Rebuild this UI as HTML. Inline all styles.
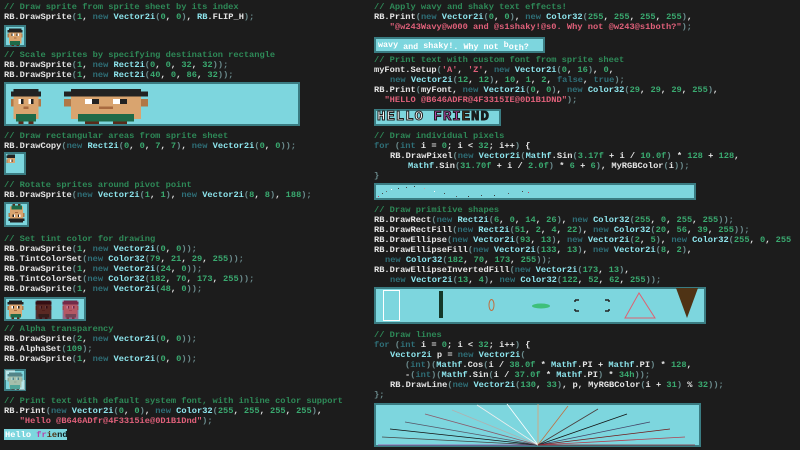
<!DOCTYPE html>
<html><head><meta charset="utf-8"><style>
html,body{margin:0;padding:0;background:#1c1c1c;width:800px;height:450px;overflow:hidden;position:relative}
.l{position:absolute;white-space:pre;font-family:"Liberation Mono",monospace;font-size:8.7px;line-height:10px;color:#e6e6e6;font-weight:bold}
.c{color:#2e8a58}.k{color:#2f6f78}.t{color:#8ee6ee}.n{color:#3aaa70}.s{color:#e0607a}.p{color:#6a8a8c}
.box{position:absolute;background:#7dd6de;border:2px solid #3a7c82;box-sizing:border-box}
svg{position:absolute}
</style></head><body>
<svg width="0" height="0" style="position:absolute">
<defs>
<g id="spr" shape-rendering="crispEdges">
<rect x="3" y="2" width="10" height="3" fill="#222"/>
<rect x="2" y="3" width="12" height="2" fill="#222"/>
<rect x="3" y="5" width="10" height="7" fill="#d9a46f"/>
<rect x="2" y="6" width="1" height="3" fill="#b07848"/>
<rect x="13" y="6" width="1" height="3" fill="#b07848"/>
<rect x="5" y="6" width="1" height="2" fill="#fff"/><rect x="6" y="6" width="1" height="2" fill="#222"/>
<rect x="9" y="6" width="1" height="2" fill="#fff"/><rect x="10" y="6" width="1" height="2" fill="#222"/>
<rect x="7" y="9" width="2" height="1" fill="#a86a40"/>
<rect x="4" y="12" width="8" height="3" fill="#1e6a48"/>
<rect x="3" y="12" width="1" height="2" fill="#d9a46f"/><rect x="12" y="12" width="1" height="2" fill="#d9a46f"/>
<rect x="5" y="15" width="2" height="1" fill="#5a2a1a"/><rect x="9" y="15" width="2" height="1" fill="#5a2a1a"/>
</g>
</defs></svg>

<!-- LEFT -->
<div class="l c" style="left:4px;top:2px">// Draw sprite from sprite sheet by its index</div>
<div class="l" style="left:4px;top:12px">RB.DrawSprite<span class="p">(</span><span class="n">1</span>, <span class="k">new</span> <span class="t">Vector2i</span><span class="p">(</span><span class="n">0</span>, <span class="n">0</span><span class="p">)</span>, <span class="t">RB</span>.FLIP_H<span class="p">);</span></div>
<div class="box" style="left:4px;top:25px;width:22px;height:22px"></div>
<svg style="left:5px;top:26px" width="20" height="20" viewBox="0 0 16 16"><g transform="translate(16,0) scale(-1,1)"><use href="#spr"/></g></svg>

<div class="l c" style="left:4px;top:50px">// Scale sprites by specifying destination rectangle</div>
<div class="l" style="left:4px;top:60px">RB.DrawSprite<span class="p">(</span><span class="n">1</span>, <span class="k">new</span> <span class="t">Rect2i</span><span class="p">(</span><span class="n">0</span>, <span class="n">0</span>, <span class="n">32</span>, <span class="n">32</span><span class="p">));</span></div>
<div class="l" style="left:4px;top:70px">RB.DrawSprite<span class="p">(</span><span class="n">1</span>, <span class="k">new</span> <span class="t">Rect2i</span><span class="p">(</span><span class="n">40</span>, <span class="n">0</span>, <span class="n">86</span>, <span class="n">32</span><span class="p">));</span></div>
<div class="box" style="left:4px;top:82px;width:296px;height:44px"></div>
<svg style="left:6px;top:84px" width="40" height="40" viewBox="0 0 16 16" preserveAspectRatio="none"><use href="#spr"/></svg>
<svg style="left:50px;top:84px" width="112" height="40" viewBox="0 0 16 16" preserveAspectRatio="none"><use href="#spr"/></svg>

<div class="l c" style="left:4px;top:131px">// Draw rectangular areas from sprite sheet</div>
<div class="l" style="left:4px;top:141px">RB.DrawCopy<span class="p">(</span><span class="k">new</span> <span class="t">Rect2i</span><span class="p">(</span><span class="n">0</span>, <span class="n">0</span>, <span class="n">7</span>, <span class="n">7</span><span class="p">)</span>, <span class="k">new</span> <span class="t">Vector2i</span><span class="p">(</span><span class="n">0</span>, <span class="n">0</span><span class="p">));</span></div>
<div class="box" style="left:4px;top:152px;width:22px;height:23px"></div>
<svg style="left:5px;top:153px" width="10" height="10" viewBox="0 0 8 8"><use href="#spr" transform="translate(-1,-1)"/></svg>

<div class="l c" style="left:4px;top:180px">// Rotate sprites around pivot point</div>
<div class="l" style="left:4px;top:190px">RB.DrawSprite<span class="p">(</span><span class="k">new</span> <span class="t">Vector2i</span><span class="p">(</span><span class="n">1</span>, <span class="n">1</span><span class="p">)</span>, <span class="k">new</span> <span class="t">Vector2i</span><span class="p">(</span><span class="n">8</span>, <span class="n">8</span><span class="p">)</span>, <span class="n">188</span><span class="p">);</span></div>
<div class="box" style="left:4px;top:202px;width:25px;height:25px"></div>
<svg style="left:6px;top:204px" width="21" height="21" viewBox="0 0 16 16"><g transform="rotate(180 8 8)"><use href="#spr"/></g></svg>

<div class="l c" style="left:4px;top:234px">// Set tint color for drawing</div>
<div class="l" style="left:4px;top:244px">RB.DrawSprite<span class="p">(</span><span class="n">1</span>, <span class="k">new</span> <span class="t">Vector2i</span><span class="p">(</span><span class="n">0</span>, <span class="n">0</span><span class="p">));</span></div>
<div class="l" style="left:4px;top:254px">RB.TintColorSet<span class="p">(</span><span class="k">new</span> <span class="t">Color32</span><span class="p">(</span><span class="n">79</span>, <span class="n">21</span>, <span class="n">29</span>, <span class="n">255</span><span class="p">));</span></div>
<div class="l" style="left:4px;top:264px">RB.DrawSprite<span class="p">(</span><span class="n">1</span>, <span class="k">new</span> <span class="t">Vector2i</span><span class="p">(</span><span class="n">24</span>, <span class="n">0</span><span class="p">));</span></div>
<div class="l" style="left:4px;top:274px">RB.TintColorSet<span class="p">(</span><span class="k">new</span> <span class="t">Color32</span><span class="p">(</span><span class="n">182</span>, <span class="n">70</span>, <span class="n">173</span>, <span class="n">255</span><span class="p">));</span></div>
<div class="l" style="left:4px;top:284px">RB.DrawSprite<span class="p">(</span><span class="n">1</span>, <span class="k">new</span> <span class="t">Vector2i</span><span class="p">(</span><span class="n">48</span>, <span class="n">0</span><span class="p">));</span></div>
<div class="box" style="left:4px;top:297px;width:82px;height:24px"></div>
<svg style="left:5px;top:298px" width="21" height="21" viewBox="0 0 16 16"><use href="#spr"/></svg>
<svg style="left:33px;top:298px" width="21" height="21" viewBox="0 0 16 16"><use href="#spr"/><rect x="2" y="2" width="12" height="14" fill="#3a0a10" opacity=".8"/></svg>
<svg style="left:60px;top:298px" width="21" height="21" viewBox="0 0 16 16"><use href="#spr"/><rect x="2" y="2" width="12" height="14" fill="#a0305d" opacity=".65"/></svg>

<div class="l c" style="left:4px;top:324px">// Alpha transparency</div>
<div class="l" style="left:4px;top:334px">RB.DrawSprite<span class="p">(</span><span class="n">2</span>, <span class="k">new</span> <span class="t">Vector2i</span><span class="p">(</span><span class="n">0</span>, <span class="n">0</span><span class="p">));</span></div>
<div class="l" style="left:4px;top:344px">RB.AlphaSet<span class="p">(</span><span class="n">109</span><span class="p">);</span></div>
<div class="l" style="left:4px;top:354px">RB.DrawSprite<span class="p">(</span><span class="n">1</span>, <span class="k">new</span> <span class="t">Vector2i</span><span class="p">(</span><span class="n">0</span>, <span class="n">0</span><span class="p">));</span></div>
<div class="box" style="left:4px;top:369px;width:22px;height:22px"></div>
<svg style="left:5px;top:370px" width="20" height="20" viewBox="0 0 16 16" opacity=".45"><rect x="0" y="0" width="8" height="8" fill="#fff"/><rect x="8" y="8" width="8" height="8" fill="#fff"/><use href="#spr"/></svg>

<div class="l c" style="left:4px;top:396px">// Print text with default system font, with inline color support</div>
<div class="l" style="left:4px;top:406px">RB.Print<span class="p">(</span><span class="k">new</span> <span class="t">Vector2i</span><span class="p">(</span><span class="n">0</span>, <span class="n">0</span><span class="p">)</span>, <span class="k">new</span> <span class="t">Color32</span><span class="p">(</span><span class="n">255</span>, <span class="n">255</span>, <span class="n">255</span>, <span class="n">255</span><span class="p">)</span>,</div>
<div class="l" style="left:4px;top:416px">   <span class="s">"Hello @B646ADfr@4F3315ie@0D1B1Dnd"</span><span class="p">);</span></div>
<div style="position:absolute;left:4px;top:429px;width:63px;height:11px;background:#7dd6de"></div>
<div class="l" style="left:5px;top:430px;line-height:10px;color:#fff">Hello <span style="color:#b646ad">fr</span><span style="color:#4f3315">ie</span><span style="color:#0d1b1d">nd</span></div>

<!-- RIGHT -->
<div class="l c" style="left:374px;top:2px">// Apply wavy and shaky text effects!</div>
<div class="l" style="left:374px;top:12px">RB.Print<span class="p">(</span><span class="k">new</span> <span class="t">Vector2i</span><span class="p">(</span><span class="n">0</span>, <span class="n">0</span><span class="p">)</span>, <span class="k">new</span> <span class="t">Color32</span><span class="p">(</span><span class="n">255</span>, <span class="n">255</span>, <span class="n">255</span>, <span class="n">255</span><span class="p">)</span>,</div>
<div class="l" style="left:374px;top:22px">   <span class="s">"@w243Wavy@w000 and @s1shaky!@s0. Why not @w243@s1both?"</span><span class="p">);</span></div>
<div class="box" style="left:374px;top:37px;width:171px;height:16px"></div>
<div class="l" style="left:378px;top:42px;color:#fff;font-size:8.4px"><span style="position:relative;top:-2px">wavy</span> and <span style="position:relative;top:-1px">shaky!</span>. Why not <span style="position:relative;top:-2px">b</span>o<span style="position:relative;top:1px">th</span>?</div>

<div class="l c" style="left:374px;top:55px">// Print text with custom font from sprite sheet</div>
<div class="l" style="left:374px;top:65px">myFont.Setup<span class="p">(</span><span class="s">'A'</span>, <span class="s">'Z'</span>, <span class="k">new</span> <span class="t">Vector2i</span><span class="p">(</span><span class="n">0</span>, <span class="n">16</span><span class="p">)</span>, <span class="n">0</span>,</div>
<div class="l" style="left:390px;top:75px"><span class="k">new</span> <span class="t">Vector2i</span><span class="p">(</span><span class="n">12</span>, <span class="n">12</span><span class="p">)</span>, <span class="n">10</span>, <span class="n">1</span>, <span class="n">2</span>, <span class="k">false</span>, <span class="k">true</span><span class="p">);</span></div>
<div class="l" style="left:374px;top:85px">RB.Print<span class="p">(</span>myFont, <span class="k">new</span> <span class="t">Vector2i</span><span class="p">(</span><span class="n">0</span>, <span class="n">0</span><span class="p">)</span>, <span class="k">new</span> <span class="t">Color32</span><span class="p">(</span><span class="n">29</span>, <span class="n">29</span>, <span class="n">29</span>, <span class="n">255</span><span class="p">)</span>,</div>
<div class="l" style="left:374px;top:95px">  <span class="s">"HELLO @B646ADFR@4F3315IE@0D1B1DND"</span><span class="p">);</span></div>
<div class="box" style="left:374px;top:109px;width:127px;height:17px"></div>
<div class="l" style="left:377px;top:110px;font-size:14px;line-height:15px;font-weight:bold;letter-spacing:1px;color:#fff;-webkit-text-stroke:1px #1d1d1d">HELLO <span style="color:#b646ad">FRI</span><span style="color:#4f3315">E</span><span style="color:#0d1b1d">ND</span></div>

<div class="l c" style="left:374px;top:131px">// Draw individual pixels</div>
<div class="l" style="left:374px;top:141px"><span class="k">for</span> <span class="p">(</span><span class="k">int</span> i = <span class="n">0</span>; i &lt; <span class="n">32</span>; i++<span class="p">)</span> {</div>
<div class="l" style="left:390px;top:151px">RB.DrawPixel<span class="p">(</span><span class="k">new</span> <span class="t">Vector2i</span><span class="p">(</span><span class="t">Mathf</span>.Sin<span class="p">(</span><span class="n">3.17f</span> + i / <span class="n">10.0f</span><span class="p">)</span> * <span class="n">128</span> + <span class="n">128</span>,</div>
<div class="l" style="left:408px;top:161px"><span class="t">Mathf</span>.Sin<span class="p">(</span><span class="n">31.70f</span> + i / <span class="n">2.0f</span><span class="p">)</span> * <span class="n">6</span> + <span class="n">6</span><span class="p">)</span>, MyRGBColor<span class="p">(</span>i<span class="p">));</span></div>
<div class="l p" style="left:374px;top:171px">}</div>
<div class="box" style="left:374px;top:183px;width:322px;height:17px"></div>
<svg style="left:376px;top:185px" width="318" height="13" shape-rendering="crispEdges">
<rect x="2" y="11" width="1" height="1" fill="#c04060"/><rect x="6" y="8" width="1" height="1" fill="#444"/><rect x="10" y="6" width="1" height="1" fill="#666"/><rect x="15" y="4" width="1" height="1" fill="#fff"/><rect x="22" y="3" width="1" height="1" fill="#333"/><rect x="30" y="2" width="1" height="1" fill="#444"/><rect x="38" y="1" width="1" height="1" fill="#333"/><rect x="48" y="3" width="1" height="1" fill="#d0a0a0"/><rect x="58" y="6" width="1" height="1" fill="#fff"/><rect x="68" y="8" width="1" height="1" fill="#444"/><rect x="80" y="11" width="1" height="1" fill="#555"/><rect x="92" y="11" width="1" height="1" fill="#333"/><rect x="105" y="10" width="1" height="1" fill="#444"/><rect x="118" y="10" width="1" height="1" fill="#333"/><rect x="132" y="8" width="1" height="1" fill="#555"/><rect x="146" y="6" width="1" height="1" fill="#444"/><rect x="152" y="7" width="1" height="1" fill="#c04060"/></svg>

<div class="l c" style="left:374px;top:205px">// Draw primitive shapes</div>
<div class="l" style="left:374px;top:215px">RB.DrawRect<span class="p">(</span><span class="k">new</span> <span class="t">Rect2i</span><span class="p">(</span><span class="n">6</span>, <span class="n">0</span>, <span class="n">14</span>, <span class="n">26</span><span class="p">)</span>, <span class="k">new</span> <span class="t">Color32</span><span class="p">(</span><span class="n">255</span>, <span class="n">0</span>, <span class="n">255</span>, <span class="n">255</span><span class="p">));</span></div>
<div class="l" style="left:374px;top:225px">RB.DrawRectFill<span class="p">(</span><span class="k">new</span> <span class="t">Rect2i</span><span class="p">(</span><span class="n">51</span>, <span class="n">2</span>, <span class="n">4</span>, <span class="n">22</span><span class="p">)</span>, <span class="k">new</span> <span class="t">Color32</span><span class="p">(</span><span class="n">20</span>, <span class="n">56</span>, <span class="n">39</span>, <span class="n">255</span><span class="p">));</span></div>
<div class="l" style="left:374px;top:235px">RB.DrawEllipse<span class="p">(</span><span class="k">new</span> <span class="t">Vector2i</span><span class="p">(</span><span class="n">93</span>, <span class="n">13</span><span class="p">)</span>, <span class="k">new</span> <span class="t">Vector2i</span><span class="p">(</span><span class="n">2</span>, <span class="n">5</span><span class="p">)</span>, <span class="k">new</span> <span class="t">Color32</span><span class="p">(</span><span class="n">255</span>, <span class="n">0</span>, <span class="n">255</span></div>
<div class="l" style="left:374px;top:245px">RB.DrawEllipseFill<span class="p">(</span><span class="k">new</span> <span class="t">Vector2i</span><span class="p">(</span><span class="n">133</span>, <span class="n">13</span><span class="p">)</span>, <span class="k">new</span> <span class="t">Vector2i</span><span class="p">(</span><span class="n">8</span>, <span class="n">2</span><span class="p">)</span>,</div>
<div class="l" style="left:385px;top:255px"><span class="k">new</span> <span class="t">Color32</span><span class="p">(</span><span class="n">182</span>, <span class="n">70</span>, <span class="n">173</span>, <span class="n">255</span><span class="p">));</span></div>
<div class="l" style="left:374px;top:265px">RB.DrawEllipseInvertedFill<span class="p">(</span><span class="k">new</span> <span class="t">Vector2i</span><span class="p">(</span><span class="n">173</span>, <span class="n">13</span><span class="p">)</span>,</div>
<div class="l" style="left:390px;top:275px"><span class="k">new</span> <span class="t">Vector2i</span><span class="p">(</span><span class="n">13</span>, <span class="n">4</span><span class="p">)</span>, <span class="k">new</span> <span class="t">Color32</span><span class="p">(</span><span class="n">122</span>, <span class="n">52</span>, <span class="n">62</span>, <span class="n">255</span><span class="p">));</span></div>
<div class="box" style="left:374px;top:287px;width:332px;height:37px"></div>
<svg style="left:374px;top:287px" width="332" height="37">
<rect x="9.5" y="3.5" width="16" height="30" fill="none" stroke="#fff" stroke-width="1"/>
<rect x="65" y="4" width="4" height="27" fill="#14382a"/>
<ellipse cx="117.5" cy="18" rx="2.5" ry="5.5" fill="none" stroke="#c07040" stroke-width="1"/>
<ellipse cx="167" cy="19" rx="9" ry="2.5" fill="#3ec07a"/>
<path d="M201 13h4M201 13v2M201 24h4M201 24v-2M235 13h-4M235 13v2M235 24h-4M235 24v-2" stroke="#222" stroke-width="1.5" fill="none"/>
<path d="M265 6L251 31H281Z" fill="none" stroke="#e06070" stroke-width="1"/>
<path d="M302 1H324L313 31Z" fill="#4f3315"/>
</svg>

<div class="l c" style="left:374px;top:330px">// Draw lines</div>
<div class="l" style="left:374px;top:340px"><span class="k">for</span> <span class="p">(</span><span class="k">int</span> i = <span class="n">0</span>; i &lt; <span class="n">32</span>; i++<span class="p">)</span> {</div>
<div class="l" style="left:390px;top:350px"><span class="t">Vector2i</span> p = <span class="k">new</span> <span class="t">Vector2i</span><span class="p">(</span></div>
<div class="l" style="left:405px;top:360px"><span class="p">(</span><span class="k">int</span><span class="p">)(</span><span class="t">Mathf</span>.Cos<span class="p">(</span>i / <span class="n">38.0f</span> * <span class="t">Mathf</span>.PI + <span class="t">Mathf</span>.PI<span class="p">)</span> * <span class="n">128</span>,</div>
<div class="l" style="left:405px;top:370px">-<span class="p">(</span><span class="k">int</span><span class="p">)(</span><span class="t">Mathf</span>.Sin<span class="p">(</span>i / <span class="n">37.0f</span> * <span class="t">Mathf</span>.PI<span class="p">)</span> * <span class="n">34h</span><span class="p">));</span></div>
<div class="l" style="left:390px;top:380px">RB.DrawLine<span class="p">(</span><span class="k">new</span> <span class="t">Vector2i</span><span class="p">(</span><span class="n">130</span>, <span class="n">33</span><span class="p">)</span>, p, MyRGBColor<span class="p">(</span>i + <span class="n">31</span><span class="p">)</span> % <span class="n">32</span><span class="p">));</span></div>
<div class="l p" style="left:374px;top:390px">};</div>
<div class="box" style="left:374px;top:403px;width:327px;height:44px"></div>
<svg style="left:374px;top:403px" width="327" height="44" stroke-width="0.8">
<line x1="164" y1="42" x2="4" y2="42" stroke="#a040a0"/>
<line x1="164" y1="42" x2="8" y2="34" stroke="#444"/>
<line x1="164" y1="42" x2="16" y2="26" stroke="#111"/>
<line x1="164" y1="42" x2="31" y2="19" stroke="#556"/>
<line x1="164" y1="42" x2="51" y2="11" stroke="#8a5a6a"/>
<line x1="164" y1="42" x2="78" y2="7" stroke="#b0b0b0"/>
<line x1="164" y1="42" x2="103" y2="2" stroke="#eee"/>
<line x1="164" y1="42" x2="133" y2="1" stroke="#fff"/>
<line x1="164" y1="42" x2="164" y2="1" stroke="#e0a070"/>
<line x1="164" y1="42" x2="194" y2="3" stroke="#c07040"/>
<line x1="164" y1="42" x2="224" y2="6" stroke="#4a3a3a"/>
<line x1="164" y1="42" x2="253" y2="11" stroke="#111"/>
<line x1="164" y1="42" x2="276" y2="19" stroke="#446"/>
<line x1="164" y1="42" x2="296" y2="26" stroke="#701818"/>
<line x1="164" y1="42" x2="311" y2="34" stroke="#b04050"/>
<line x1="164" y1="42" x2="321" y2="42" stroke="#902030"/>
</svg>
</body></html>
